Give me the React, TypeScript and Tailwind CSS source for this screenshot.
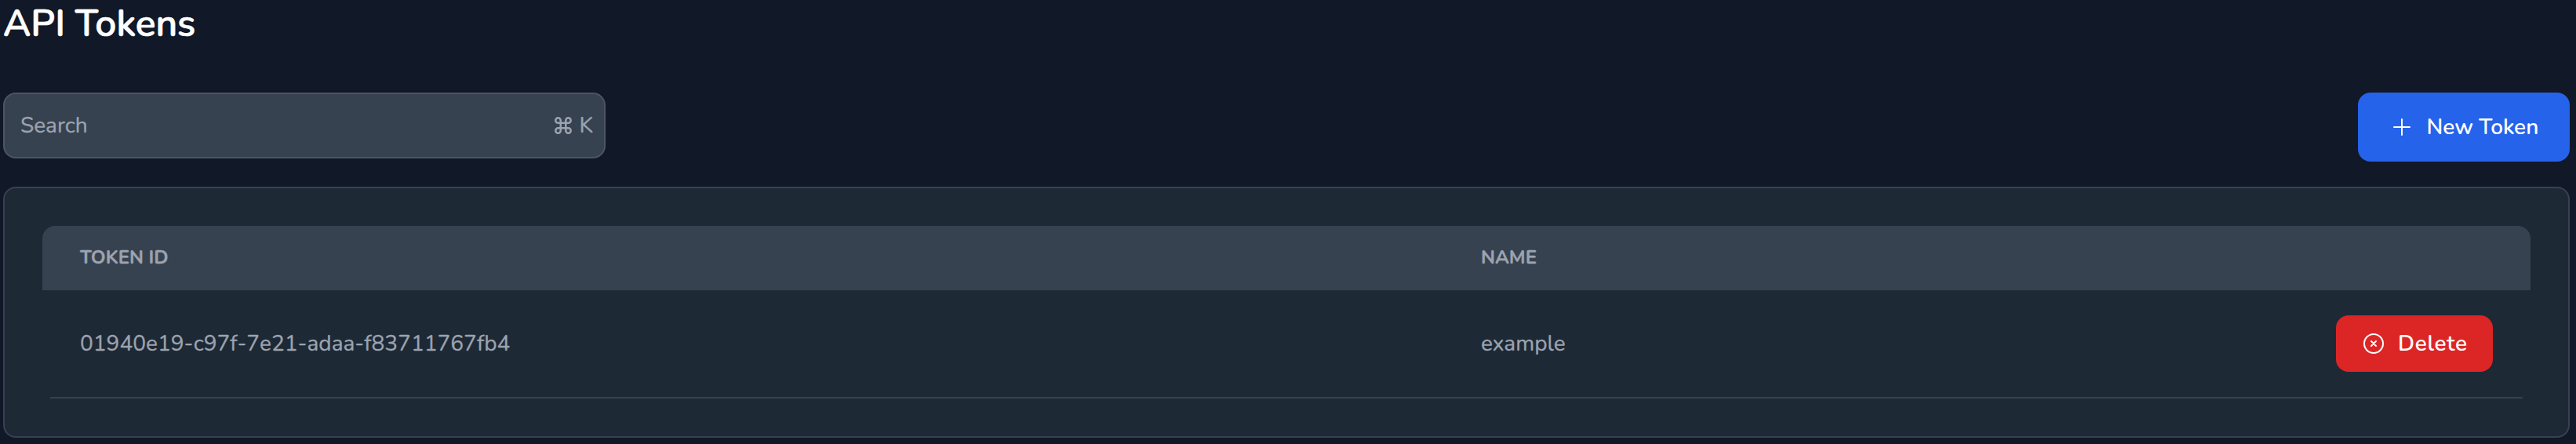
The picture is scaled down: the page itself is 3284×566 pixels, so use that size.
import React from 'react';

function PlusIcon() {
  return (
    <svg className="h-8 w-8 shrink-0" viewBox="0 0 32 32" fill="none" stroke="currentColor" strokeWidth="2" strokeLinecap="round">
      <path d="M16 6v20M6 16h20" />
    </svg>
  );
}

function CircleXIcon() {
  return (
    <svg className="h-8 w-8 shrink-0" viewBox="0 0 32 32" fill="none" stroke="currentColor" strokeWidth="2" strokeLinecap="round">
      <circle cx="16" cy="16" r="12" />
      <path d="m13 13 6 6m0-6-6 6" />
    </svg>
  );
}

function CommandIcon() {
  return (
    <svg className="mb-px h-[22px] w-[22px] overflow-visible" viewBox="0 0 22 22" fill="none" stroke="currentColor" strokeWidth="2.5">
      <path d="M7.7 7.7h6.6v6.6H7.7zM7.7 7.7H4.5a3.2 3.2 0 1 1 3.2-3.2zM14.3 7.7V4.5a3.2 3.2 0 1 1 3.2 3.2zM14.3 14.3h3.2a3.2 3.2 0 1 1-3.2 3.2zM7.7 14.3v3.2a3.2 3.2 0 1 1-3.2-3.2z" />
    </svg>
  );
}

const tokens = [{ id: '01940e19-c97f-7e21-adaa-f83711767fb4', name: 'example' }];

export default function App() {
  return (
    <main className="h-[566px] w-full bg-[#111827] pr-2 pl-1 font-[Nunito,Lato,sans-serif] text-[28px] leading-10 text-[#9ca3af] [-webkit-text-stroke:0.3px]">
      <h1 className="h-[118px] text-[48px] leading-[60px] font-semibold text-white [-webkit-text-stroke:0.7px]">
        API Tokens
      </h1>
      <div className="flex h-[120px] items-start justify-between">
        <div className="flex h-[84px] w-[768px] items-center justify-between rounded-2xl border-2 border-[#4b5563] bg-[#374250] pr-[14px] pl-[20px]">
          <span>Search</span>
          <span className="flex items-center gap-[9px]">
            <CommandIcon />
            <span>K</span>
          </span>
        </div>
        <button className="flex h-[88px] w-[270px] items-center rounded-2xl bg-[#2563eb] pl-10 font-semibold text-white [-webkit-text-stroke:0px]">
          <PlusIcon />
          <span className="ml-[15.5px] whitespace-nowrap">New Token</span>
        </button>
      </div>
      <section className="h-[320px] rounded-2xl border-2 border-[#374250] bg-[#1e2936] p-12">
        <div className="flex h-[82px] items-center rounded-t-2xl bg-[#374250] pb-[2px] pl-12 text-[24px] font-bold">
          <div className="w-[1786px]">TOKEN ID</div>
          <div>NAME</div>
        </div>
        {tokens.map((token) => (
          <div key={token.id} className="mx-[10px] flex h-[138px] items-center border-b-2 border-[#374250] px-[38px]">
            <div className="w-[1786px]">{token.id}</div>
            <div className="grow">{token.name}</div>
            <button className="flex h-[72px] w-[200px] items-center rounded-2xl bg-[#dc2626] pl-8 font-semibold tracking-[0.7px] text-white [-webkit-text-stroke:0px]">
              <CircleXIcon />
              <span className="ml-[15px]">Delete</span>
            </button>
          </div>
        ))}
      </section>
    </main>
  );
}
